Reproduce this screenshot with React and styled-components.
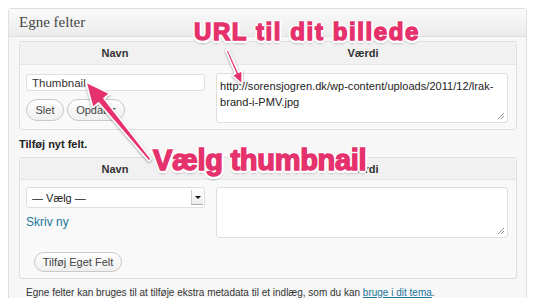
import React from "react";
import styled, { createGlobalStyle } from "styled-components";

const Global = createGlobalStyle`
  html, body { margin: 0; padding: 0; background: #fff; }
  body { font-family: "Liberation Sans", Arial, sans-serif; color: #333; }
`;

const Page = styled.div`
  position: relative;
  width: 550px;
  height: 298px;
  overflow: hidden;
  padding: 8px 0 0 8px;
  box-sizing: border-box;
`;

const Panel = styled.div`
  width: 519px;
  height: 300px;
  box-sizing: border-box;
  border: 1px solid #dfdfdf;
  border-radius: 3px 3px 0 0;
  background: #f7f7f7;
`;

const PanelHeader = styled.div`
  height: 27px;
  display: flex;
  align-items: center;
  padding-left: 10px;
  border-bottom: 1px solid #dfdfdf;
  background: linear-gradient(#f9f9f9, #ececec);
  font-family: "Liberation Serif", Georgia, serif;
  font-size: 15px;
  color: #464646;
`;

const PanelBody = styled.div`
  padding: 4px 9px 0 10px;
`;

const Table = styled.div`
  border: 1px solid #dfdfdf;
  border-radius: 3px;
  background: #f9f9f9;
  display: grid;
  grid-template-columns: 190px 1fr;
`;

const HeadCell = styled.div`
  height: ${(p) => p.$h}px;
  display: flex;
  align-items: center;
  justify-content: center;
  background: #f1f1f1;
  border-bottom: 1px solid #e6e6e6;
  font-size: 11px;
  font-weight: bold;
  color: #333;
`;

const Cell = styled.div`
  padding: ${(p) => p.$pad};
  display: flex;
  flex-direction: column;
`;

const TextInput = styled.div`
  height: 17px;
  box-sizing: border-box;
  width: 179px;
  border: 1px solid #dfdfdf;
  border-radius: 3px;
  background: #fff;
  display: flex;
  align-items: center;
  padding-left: 5px;
  font-size: 11.5px;
  color: #333;
`;

const ButtonRow = styled.div`
  display: flex;
  gap: 3px;
  margin-top: 8px;
`;

const Button = styled.div`
  width: ${(p) => p.$w}px;
  height: ${(p) => p.$h}px;
  box-sizing: border-box;
  border: 1px solid #c9c9c9;
  border-radius: 11px;
  background: linear-gradient(#fefefe, #efefef);
  display: flex;
  align-items: center;
  justify-content: center;
  font-size: 11px;
  color: #444;
`;

const TextArea = styled.div`
  position: relative;
  height: ${(p) => p.$h}px;
  box-sizing: border-box;
  border: 1px solid #dfdfdf;
  border-radius: 3px;
  background: #fff;
  padding: 4px 3px;
  font-size: 11px;
  line-height: 16px;
  letter-spacing: 0.05px;
  color: #222;
  white-space: pre-line;
`;

const Grip = styled.svg`
  position: absolute;
  right: 2px;
  bottom: 2px;
`;

const SectionTitle = styled.div`
  font-size: 11px;
  font-weight: bold;
  color: #222;
  padding: 8px 0 7px 0;
`;

const Select = styled.div`
  width: 179px;
  height: 21px;
  box-sizing: border-box;
  border: 1px solid #dfdfdf;
  border-radius: 3px;
  background: #fff;
  display: flex;
  align-items: center;
  justify-content: space-between;
  padding: 0 1px 0 5px;
  font-size: 11px;
  color: #222;
`;

const SelectArrow = styled.div`
  width: 11px;
  height: 14px;
  border-left: 1px solid #ccc;
  border-bottom: 1px solid #aaa;
  background: linear-gradient(#fff, #ececec);
  display: flex;
  align-items: center;
  justify-content: center;
  &::after {
    content: "";
    border-left: 3px solid transparent;
    border-right: 3px solid transparent;
    border-top: 3px solid #111;
  }
`;

const Link = styled.a`
  color: #21759b;
  font-size: ${(p) => p.$size || 12}px;
  text-decoration: ${(p) => (p.$u ? "underline" : "none")};
`;

const SkrivNy = styled.div`
  margin-top: 6px;
  line-height: 14px;
`;

const AddRow = styled.div`
  grid-column: 1 / -1;
  padding: 14px 0 6px 14px;
`;

const Footer = styled.div`
  font-size: 10px;
  color: #333;
  padding: 8px 0 0 7px;
`;

const Overlay = styled.div`
  position: absolute;
  inset: 0;
  pointer-events: none;
`;

const Callout = styled.div`
  position: absolute;
  left: ${(p) => p.$x}px;
  top: ${(p) => p.$y}px;
  font-family: "Liberation Sans", Arial, sans-serif;
  font-weight: bold;
  font-size: ${(p) => p.$size}px;
  letter-spacing: ${(p) => p.$ls}px;
  line-height: 1;
  white-space: nowrap;
  color: #e5316c;
  -webkit-text-stroke: 1.4px #e5316c;
  text-shadow:
    2px 0 0 #fff, -2px 0 0 #fff, 0 2px 0 #fff, 0 -2px 0 #fff,
    1.5px 1.5px 0 #fff, -1.5px 1.5px 0 #fff, 1.5px -1.5px 0 #fff, -1.5px -1.5px 0 #fff,
    2.5px 1px 0 #fff, -2.5px 1px 0 #fff, 1px 2.5px 0 #fff, -1px 2.5px 0 #fff,
    0 3px 3px rgba(0, 0, 0, 0.45);
`;

function arrowPoints(x1, y1, x2, y2, tailW, neckW, headLen, headW) {
  const dx = x2 - x1;
  const dy = y2 - y1;
  const len = Math.hypot(dx, dy);
  const ux = dx / len;
  const uy = dy / len;
  const nx = -uy;
  const ny = ux;
  const bx = x2 - ux * headLen;
  const by = y2 - uy * headLen;
  const pts = [
    [x1 + nx * tailW / 2, y1 + ny * tailW / 2],
    [bx + nx * neckW / 2, by + ny * neckW / 2],
    [bx + nx * headW / 2, by + ny * headW / 2],
    [x2, y2],
    [bx - nx * headW / 2, by - ny * headW / 2],
    [bx - nx * neckW / 2, by - ny * neckW / 2],
    [x1 - nx * tailW / 2, y1 - ny * tailW / 2],
  ];
  return pts.map((p) => p.map((v) => v.toFixed(1)).join(",")).join(" ");
}

const Arrows = () => (
  <svg width="550" height="298" style={{ position: "absolute", left: 0, top: 0 }}>
    <defs>
      <filter id="sh" x="-20%" y="-20%" width="140%" height="140%">
        <feDropShadow dx="0" dy="1" stdDeviation="1.2" floodColor="#000" floodOpacity="0.4" />
      </filter>
    </defs>
    <g filter="url(#sh)" fill="#e5316c" stroke="#fff" strokeWidth="1.5" strokeLinejoin="round">
      <polygon points={arrowPoints(227, 50, 242, 84, 2.5, 3, 12, 11)} />
      <polygon points={arrowPoints(150, 160, 86, 82, 3, 7, 24, 22)} />
    </g>
  </svg>
);

export default function App() {
  return (
    <Page>
      <Global />
      <Panel>
        <PanelHeader>Egne felter</PanelHeader>
        <PanelBody>
          <Table>
            <HeadCell $h={22}>Navn</HeadCell>
            <HeadCell $h={22}>Værdi</HeadCell>
            <Cell $pad="9px 5px 7px 6px">
              <TextInput>Thumbnail</TextInput>
              <ButtonRow>
                <Button $w={38} $h={22}>Slet</Button>
                <Button $w={58} $h={22}>Opdater</Button>
              </ButtonRow>
            </Cell>
            <Cell $pad="8px 8px 6px 6px">
              <TextArea $h={50}>
                {"http://sorensjogren.dk/wp-content/uploads/2011/12/lrak-\nbrand-i-PMV.jpg"}
                <Grip width="9" height="9" viewBox="0 0 9 9">
                  <path d="M8 2 L2 8 M8 5 L5 8" stroke="#999" strokeWidth="1" />
                </Grip>
              </TextArea>
            </Cell>
          </Table>
          <SectionTitle>Tilføj nyt felt.</SectionTitle>
          <Table>
            <HeadCell $h={21}>Navn</HeadCell>
            <HeadCell $h={21}>Værdi</HeadCell>
            <Cell $pad="7px 5px 0 6px">
              <Select>
                — Vælg —
                <SelectArrow />
              </Select>
              <SkrivNy>
                <Link>Skriv ny</Link>
              </SkrivNy>
            </Cell>
            <Cell $pad="7px 8px 0 6px">
              <TextArea $h={51}>
                <Grip width="9" height="9" viewBox="0 0 9 9">
                  <path d="M8 2 L2 8 M8 5 L5 8" stroke="#999" strokeWidth="1" />
                </Grip>
              </TextArea>
            </Cell>
            <AddRow>
              <Button $w={88} $h={20}>Tilføj Eget Felt</Button>
            </AddRow>
          </Table>
          <Footer>
            Egne felter kan bruges til at tilføje ekstra metadata til et indlæg, som du kan{" "}
            <Link $u $size={10}>bruge i dit tema</Link>.
          </Footer>
        </PanelBody>
      </Panel>
      <Overlay>
        <Arrows />
        <Callout $x={194} $y={20} $size={24} $ls={1.6}>URL til dit billede</Callout>
        <Callout $x={153} $y={146} $size={29} $ls={-0.3}>Vælg thumbnail</Callout>
      </Overlay>
    </Page>
  );
}
